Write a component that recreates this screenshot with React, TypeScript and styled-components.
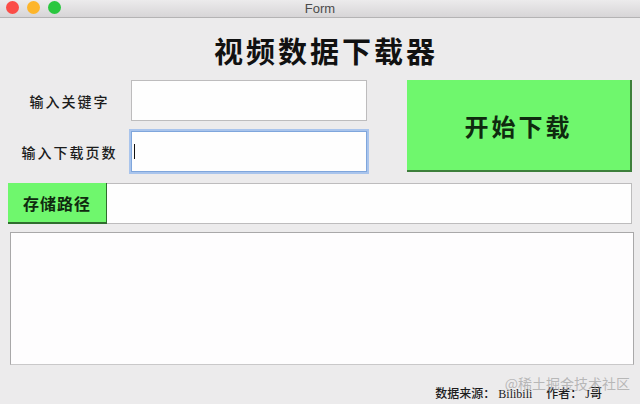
import styled, { createGlobalStyle } from "styled-components";

const GlobalStyle = createGlobalStyle`
  html, body {
    margin: 0;
    padding: 0;
    background: #ecebec;
  }
`;

const cjk = `"Noto Sans CJK SC", "Noto Sans", sans-serif`;
const green = "#6ff76d";

const Window = styled.div`
  width: 640px;
  height: 404px;
  display: flex;
  flex-direction: column;
  background: #ecebec;
  overflow: hidden;
  position: relative;
`;

const TitleBar = styled.div`
  height: 17px;
  flex-shrink: 0;
  position: relative;
  display: flex;
  align-items: center;
  justify-content: center;
  background: linear-gradient(#ecebec, #d7d5d7);
  border-bottom: 1px solid #b4b3b4;
  font-family: "Liberation Sans", Arial, sans-serif;
  font-size: 13px;
  color: #4b4b4b;
`;

const Lights = styled.div`
  position: absolute;
  left: 6px;
  top: 1px;
  display: flex;
  gap: 8px;
`;

const Light = styled.span<{ color: string }>`
  width: 13px;
  height: 13px;
  border-radius: 50%;
  background: ${(p) => p.color};
`;

const Heading = styled.h1`
  margin: 14px 0 0 12px;
  height: 36px;
  line-height: 36px;
  text-align: center;
  font-family: ${cjk};
  font-size: 29px;
  font-weight: 700;
  letter-spacing: 3px;
  color: #111;
`;

const Body = styled.div`
  display: flex;
  flex-direction: column;
  padding: 12px 8px 0 8px;
  flex: 1;
`;

const TopSection = styled.div`
  display: flex;
  align-items: flex-start;
`;

const FieldGrid = styled.div`
  display: grid;
  grid-template-columns: 123px 236px;
  grid-auto-rows: 41px;
  row-gap: 10px;
  align-items: center;
`;

const Label = styled.span`
  text-align: center;
  font-family: ${cjk};
  font-size: 14px;
  font-weight: 500;
  letter-spacing: 2px;
  color: #1b1b1b;
`;

const TextBox = styled.div<{ focused?: boolean }>`
  height: 41px;
  box-sizing: border-box;
  background: #fefefe;
  border: 1px solid ${(p) => (p.focused ? "#7fa6dc" : "#bdbcbd")};
  box-shadow: ${(p) => (p.focused ? "0 0 0 2px #a9c4ec" : "none")};
  display: flex;
  align-items: center;
  padding-left: 2px;
`;

const Caret = styled.span`
  width: 1px;
  height: 15px;
  background: #111;
`;

const StartButton = styled.button`
  margin-left: 40px;
  width: 225px;
  height: 92px;
  background: ${green};
  border: none;
  border-right: 2px solid #3d7f3b;
  border-bottom: 2px solid #3d7f3b;
  font-family: ${cjk};
  font-size: 24px;
  font-weight: 700;
  letter-spacing: 3px;
  color: #0f2a0f;
  padding: 0;
`;

const PathRow = styled.div`
  margin-top: 11px;
  display: flex;
  height: 41px;
`;

const PathButton = styled.button`
  width: 99px;
  height: 41px;
  flex-shrink: 0;
  background: ${green};
  border: none;
  border-bottom: 2px solid #2f6d2e;
  border-right: 1px solid #2f6d2e;
  font-family: ${cjk};
  font-size: 16px;
  font-weight: 700;
  letter-spacing: 1px;
  color: #0f2a0f;
  padding: 0;
`;

const PathField = styled.div`
  flex: 1;
  box-sizing: border-box;
  background: #fefefe;
  border: 1px solid #bdbcbd;
  border-left: none;
`;

const LogArea = styled.div`
  margin: 8px -2px 0 2px;
  height: 133px;
  box-sizing: border-box;
  background: #fefdfe;
  border: 1px solid #a9a8a9;
  border-bottom-color: #c9c8c9;
`;

const Footer = styled.div`
  position: relative;
  flex: 1;
  display: flex;
  justify-content: flex-end;
  align-items: center;
  gap: 14px;
  padding: 16px 38px 0 0;
  font-family: "Liberation Serif", ${cjk};
  font-size: 12px;
  font-weight: 500;
  color: #1c1c1c;
`;

const Watermark = styled.span`
  position: absolute;
  right: 10px;
  top: 8px;
  font-family: ${cjk};
  font-size: 14px;
  font-weight: 400;
  color: rgba(160, 160, 160, 0.7);
  pointer-events: none;
`;

export default function App() {
  return (
    <>
      <GlobalStyle />
      <Window>
        <TitleBar>
          <Lights>
            <Light color="#fb4c47" />
            <Light color="#fdb52b" />
            <Light color="#2ac73f" />
          </Lights>
          Form
        </TitleBar>
        <Heading>视频数据下载器</Heading>
        <Body>
          <TopSection>
            <FieldGrid>
              <Label>输入关键字</Label>
              <TextBox />
              <Label>输入下载页数</Label>
              <TextBox focused>
                <Caret />
              </TextBox>
            </FieldGrid>
            <StartButton>开始下载</StartButton>
          </TopSection>
          <PathRow>
            <PathButton>存储路径</PathButton>
            <PathField />
          </PathRow>
          <LogArea />
        </Body>
        <Footer>
          <span>数据来源： Bilibili</span>
          <span>作者： J哥</span>
          <Watermark>@稀土掘金技术社区</Watermark>
        </Footer>
      </Window>
    </>
  );
}
